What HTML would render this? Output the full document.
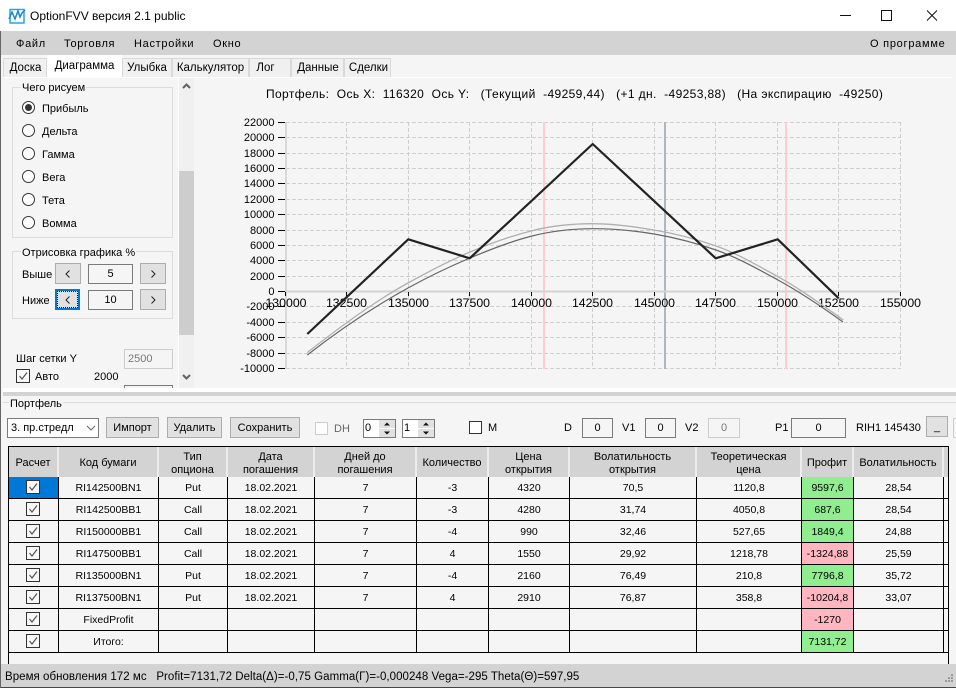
<!DOCTYPE html>
<html><head><meta charset="utf-8"><style>
html,body{margin:0;padding:0}
body{width:956px;height:688px;position:relative;overflow:hidden;background:#f5f5f5;font:11px "Liberation Sans",sans-serif;color:#000}
.a{position:absolute;box-sizing:border-box}
.t{position:absolute;white-space:nowrap;line-height:14px;font-size:11px}
.btn{position:absolute;box-sizing:border-box;background:#e1e1e1;border:1px solid #adadad;text-align:center;font-size:11px;line-height:20px;white-space:nowrap}
.btn svg{position:absolute;left:50%;top:50%;margin:-4px 0 0 -3px}
.fld{position:absolute;box-sizing:border-box;background:#f5f5f5;border:1px solid #7a7a7a;text-align:center;font-size:11px;line-height:18px}
.tab{position:absolute;top:58px;height:19px;box-sizing:border-box;background:#f0f0f0;border:1px solid #d9d9d9;border-bottom:0;text-align:center;line-height:18px;font-size:11.5px;white-space:nowrap}
.grp{position:absolute;box-sizing:border-box;border:1px solid #dcdcdc}
.lg{position:absolute;background:#f5f5f5;padding:0 1px;line-height:14px;font-size:11px;white-space:nowrap}
.rad{position:absolute;left:22px;width:13px;height:13px;box-sizing:border-box;border:1px solid #333;border-radius:50%;background:#fff}
.chk{display:block;position:absolute;width:14px;height:14px;box-sizing:border-box;border:1px solid #333;background:#f8f8f8}
.chk svg{position:absolute;left:0;top:0}
table{border-collapse:separate;border-spacing:0;table-layout:fixed;position:absolute;left:0;top:0;width:939px}
th{background:#d3d3d3;height:30px;padding:3px 0 0;font-weight:normal;font-size:11px;line-height:13px;border-right:2px solid #ececec;box-sizing:border-box;text-align:center}
td{height:22px;padding:0;border-right:1px solid #000;border-bottom:1px solid #000;box-sizing:border-box;text-align:center;font-size:10.5px;position:relative;background:#f5f5f5}
td.g{background:#90ee90}td.p{background:#ffb6c1}td.b{background:#0078d7}
td .chk{left:17px;top:3px}
</style></head><body>

<!-- title bar -->
<div class="a" style="left:0;top:0;width:956px;height:31px;background:#fff"></div>
<svg class="a" style="left:8px;top:7px" width="18" height="18" viewBox="0 0 18 18">
<path d="M2 2.5H16V16H2Z" fill="none" stroke="#29a8e0" stroke-width="1.5"/>
<path d="M1 12L4 5L7 12L10 4L12 10L14 6L17 3" fill="none" stroke="#1b86c8" stroke-width="1.5"/>
</svg>
<div class="t" style="left:30px;top:9px;font-size:12px">OptionFVV версия 2.1 public</div>
<svg class="a" style="left:830px;top:5px" width="126" height="22">
<path d="M10 10.5H21" stroke="#111"/>
<path d="M51.5 5.5H61.5V15.5H51.5Z" fill="none" stroke="#111"/>
<path d="M97 5.5L107 15.5M107 5.5L97 15.5" stroke="#111"/>
</svg>

<!-- menu -->
<div class="a" style="left:0;top:31px;width:956px;height:24px;background:#d3d3d3"></div>
<div class="t" style="left:16px;top:37px;letter-spacing:.7px">Файл</div>
<div class="t" style="left:64px;top:37px;letter-spacing:.65px">Торговля</div>
<div class="t" style="left:134px;top:37px;letter-spacing:.7px">Настройки</div>
<div class="t" style="left:213px;top:37px;letter-spacing:.7px">Окно</div>
<div class="t" style="left:870px;top:37px;letter-spacing:.75px">О программе</div>

<!-- tabs -->
<div class="a" style="left:0;top:55px;width:956px;height:22px;background:#f5f5f5"></div>
<div class="tab" style="left:3px;width:44px;padding-left:1px">Доска</div>
<div class="tab" style="left:47px;top:55px;height:22px;width:75px;background:#fff;border:0;line-height:22px">Диаграмма</div>
<div class="tab" style="left:122px;width:50px">Улыбка</div>
<div class="tab" style="left:172px;width:77px">Калькулятор</div>
<div class="tab" style="left:249px;width:42px;padding-right:9px">Лог</div>
<div class="tab" style="left:291px;width:53px;padding-left:1px">Данные</div>
<div class="tab" style="left:344px;width:47px;padding-left:2px">Сделки</div>
<div class="a" style="left:3px;top:77px;width:950px;height:1px;background:#fff"></div>

<!-- left panel -->
<div class="a" style="left:178px;top:78px;width:1px;height:310px;background:#fff"></div>
<div class="a" style="left:179px;top:78px;width:15px;height:310px;background:#f0f0f0"></div>
<div class="a" style="left:179px;top:171px;width:15px;height:164px;background:#cdcdcd"></div>
<svg class="a" style="left:179px;top:78px" width="15" height="310">
<path d="M4 10L7.5 6.5L11 10" fill="none" stroke="#606060" stroke-width="2"/>
<path d="M4 297L7.5 300.5L11 297" fill="none" stroke="#606060" stroke-width="2"/>
</svg>

<div class="grp" style="left:12px;top:87px;width:161px;height:151px"></div>
<div class="lg" style="left:21px;top:81px">Чего рисуем</div>
<div class="rad" style="top:101px;border-color:#333"><div class="a" style="left:2px;top:2px;width:7px;height:7px;border-radius:50%;background:#333"></div></div>
<div class="t" style="left:42px;top:102px">Прибыль</div>
<div class="rad" style="top:124px"></div><div class="t" style="left:42px;top:125px">Дельта</div>
<div class="rad" style="top:147px"></div><div class="t" style="left:42px;top:148px">Гамма</div>
<div class="rad" style="top:170px"></div><div class="t" style="left:42px;top:171px">Вега</div>
<div class="rad" style="top:193px"></div><div class="t" style="left:42px;top:194px">Тета</div>
<div class="rad" style="top:216px"></div><div class="t" style="left:42px;top:217px">Вомма</div>

<div class="grp" style="left:12px;top:251px;width:161px;height:68px"></div>
<div class="lg" style="left:21px;top:246px">Отрисовка графика %</div>
<div class="t" style="left:22px;top:268px">Выше</div>
<div class="btn" style="left:55px;top:263px;width:26px;height:21px"><svg width="6" height="8"><path d="M4.5 .5L1 4L4.5 7.5" fill="none" stroke="#222"/></svg></div>
<div class="fld" style="left:88px;top:264px;width:45px;height:20px">5</div>
<div class="btn" style="left:140px;top:263px;width:26px;height:21px"><svg width="6" height="8"><path d="M1.5 .5L5 4L1.5 7.5" fill="none" stroke="#222"/></svg></div>
<div class="t" style="left:22px;top:294px">Ниже</div>
<div class="btn" style="left:55px;top:289px;width:25px;height:21px;border:2px solid #0078d7"><svg width="6" height="8"><path d="M4.5 .5L1 4L4.5 7.5" fill="none" stroke="#222"/></svg><div class="a" style="left:0;top:0;width:21px;height:17px;border:1px dotted #000"></div></div>
<div class="fld" style="left:88px;top:290px;width:45px;height:20px">10</div>
<div class="btn" style="left:140px;top:289px;width:26px;height:21px"><svg width="6" height="8"><path d="M1.5 .5L5 4L1.5 7.5" fill="none" stroke="#222"/></svg></div>

<div class="t" style="left:16px;top:352px">Шаг сетки Y</div>
<div class="a" style="left:124px;top:349px;width:49px;height:20px;border:1px solid #ccc;font-size:11px;line-height:18px;padding-left:3px;color:#777">2500</div>
<span class="chk" style="left:16px;top:369px"><svg width="12" height="12"><path d="M2.5 6L5 9L10 2.5" fill="none" stroke="#555" stroke-width="1.2"/></svg></span>
<div class="t" style="left:35px;top:370px">Авто</div>
<div class="t" style="left:94px;top:370px">2000</div>
<div class="a" style="left:124px;top:385px;width:49px;height:3px;border:1px solid #7a7a7a;border-bottom:0"></div>

<!-- chart -->
<svg class="a" style="left:0;top:0" width="956" height="688" font-family="Liberation Sans" font-size="11">
<g fill="none" stroke="#cfcfcf" stroke-dasharray="4 2">
<path d="M286 122.5H901M286 137.5H901M286 153.5H901M286 168.5H901M286 183.5H901M286 199.5H901M286 214.5H901M286 230.5H901M286 245.5H901M286 260.5H901M286 276.5H901M286 306.5H901M286 322.5H901M286 337.5H901M286 353.5H901M286 368.5H901"/>
<path d="M346.5 122V369M408.5 122V369M469.5 122V369M531.5 122V369M592.5 122V369M654.5 122V369M715.5 122V369M777.5 122V369M838.5 122V369M900.5 122V369"/>
</g>
<path d="M544 122V369M786 122V369" stroke="#ffccd5" stroke-width="2"/>
<path d="M665 122V369" stroke="#aeb6c2" stroke-width="2"/>
<path d="M286 122V369" stroke="#d8d8d8" stroke-width="2"/>
<path d="M285 291.5H901" stroke="#d3d3d3" stroke-width="2"/>
<path d="M278 122.5H285M278 137.5H285M278 153.5H285M278 168.5H285M278 183.5H285M278 199.5H285M278 214.5H285M278 230.5H285M278 245.5H285M278 260.5H285M278 276.5H285M278 291.5H285M278 306.5H285M278 322.5H285M278 337.5H285M278 353.5H285M278 368.5H285" stroke="#000"/>
<path d="M285.5 292V296M346.5 292V296M408.5 292V296M469.5 292V296M531.5 292V296M592.5 292V296M654.5 292V296M715.5 292V296M777.5 292V296M838.5 292V296M900.5 292V296" stroke="#000"/>
<g text-anchor="end" fill="#000">
<text x="274.5" y="126">22000</text><text x="274.5" y="141">20000</text><text x="274.5" y="157">18000</text><text x="274.5" y="172">16000</text><text x="274.5" y="187">14000</text><text x="274.5" y="203">12000</text><text x="274.5" y="218">10000</text><text x="274.5" y="234">8000</text><text x="274.5" y="249">6000</text><text x="274.5" y="264">4000</text><text x="274.5" y="280">2000</text><text x="274.5" y="295">0</text><text x="274.5" y="310">-2000</text><text x="274.5" y="326">-4000</text><text x="274.5" y="341">-6000</text><text x="274.5" y="357">-8000</text><text x="274.5" y="372">-10000</text>
</g>
<g text-anchor="middle" font-size="12.3" fill="#000">
<text x="286" y="307">130000</text><text x="346.5" y="307">132500</text><text x="408.5" y="307">135000</text><text x="469.5" y="307">137500</text><text x="531.5" y="307">140000</text><text x="592.5" y="307">142500</text><text x="654.5" y="307">145000</text><text x="715.5" y="307">147500</text><text x="777.5" y="307">150000</text><text x="838.5" y="307">152500</text><text x="900.5" y="307">155000</text>
</g>
<path fill="none" stroke="#b0b0b0" stroke-width="1.3" d="M307.3 352.5C340.9 326.3 374.4 301.5 408 283C428.67 271.6 449.33 260.7 470 252C490.67 243.3 511.33 235.9 532 230.7C552.33 225.6 572.67 223.7 593 223.7C613.33 223.7 633.67 226.5 654 230C674.67 233.5 695.33 238.8 716 246C736.67 253.2 757.33 265.3 778 276.7C799.67 288.6 821.33 304.4 843.3 320"/>
<path fill="none" stroke="#666" stroke-width="1.2" d="M307.3 355C340.9 328.8 374.4 306.5 408 288C428.67 276.6 449.33 266.7 470 258C490.67 249.3 511.33 241.2 532 236C552.33 230.9 572.67 228.7 593 228.7C613.33 228.7 633.67 230.5 654 234C674.67 237.5 695.33 242.8 716 250C736.67 257.2 757.33 268.6 778 280C799.67 291.9 821.33 306.4 843 322"/>
<polyline fill="none" stroke="#222" stroke-width="2.2" stroke-linejoin="round" points="307.3,334 408.3,239.3 469.7,258.3 592.7,144 715.7,258.3 777.7,239.3 838.7,298.3"/>
</svg>
<div class="t" style="left:266px;top:87px;font-size:12px;white-space:pre;letter-spacing:.38px">Портфель:  Ось X:  116320  Ось Y:   (Текущий  -49259,44)   (+1 дн.  -49253,88)   (На экспирацию  -49250)</div>

<!-- splitter -->
<div class="a" style="left:3px;top:388px;width:953px;height:4px;background:#fff"></div>
<div class="a" style="left:3px;top:392px;width:953px;height:4px;background:#d3d3d3"></div>
<div class="a" style="left:3px;top:402px;width:953px;height:1px;background:#dcdcdc"></div>
<div class="lg" style="left:9px;top:397px">Портфель</div>

<!-- toolbar -->
<div class="a" style="left:7px;top:418px;width:92px;height:20px;background:#fff;border:1px solid #7a7a7a;line-height:18px;padding-left:3px;font-size:11px">3. пр.стредл<svg class="a" style="left:78px;top:6px" width="10" height="6"><path d="M1 1L5 5L9 1" fill="none" stroke="#666"/></svg></div>
<div class="btn" style="left:106px;top:417px;width:53px;height:21px">Импорт</div>
<div class="btn" style="left:167px;top:417px;width:55px;height:21px">Удалить</div>
<div class="btn" style="left:230px;top:417px;width:70px;height:21px">Сохранить</div>
<div class="a" style="left:315px;top:422px;width:13px;height:13px;background:#fdfdfd;border:1px solid #ccc"></div>
<div class="t" style="left:334px;top:422px;color:#666">DH</div>
<div class="a" style="left:363px;top:419px;width:33px;height:19px;background:#fff;border:1px solid #7a7a7a;padding-left:1px;line-height:17px">0</div>
<svg class="a" style="left:379px;top:420px" width="16" height="17"><rect width="16" height="8" fill="#e1e1e1"/><rect y="9" width="16" height="8" fill="#e1e1e1"/><path d="M5 5.5L8 2.5L11 5.5ZM5 11.5L8 14.5L11 11.5Z" fill="#111"/></svg>
<div class="a" style="left:402px;top:419px;width:33px;height:19px;background:#fff;border:1px solid #7a7a7a;padding-left:1px;line-height:17px">1</div>
<svg class="a" style="left:418px;top:420px" width="16" height="17"><rect width="16" height="8" fill="#e1e1e1"/><rect y="9" width="16" height="8" fill="#e1e1e1"/><path d="M5 5.5L8 2.5L11 5.5ZM5 11.5L8 14.5L11 11.5Z" fill="#111"/></svg>
<div class="a" style="left:469px;top:421px;width:13px;height:13px;background:#fff;border:1px solid #333"></div>
<div class="t" style="left:488px;top:421px">M</div>
<div class="t" style="left:564px;top:421px">D</div>
<div class="fld" style="left:582px;top:418px;width:31px;height:20px">0</div>
<div class="t" style="left:622px;top:421px">V1</div>
<div class="fld" style="left:645px;top:418px;width:31px;height:20px">0</div>
<div class="t" style="left:685px;top:421px">V2</div>
<div class="fld" style="left:708px;top:418px;width:32px;height:20px;border-color:#ccc;color:#777">0</div>
<div class="t" style="left:775px;top:421px">P1</div>
<div class="fld" style="left:791px;top:418px;width:55px;height:20px">0</div>
<div class="t" style="left:856px;top:421px;font-size:11px">RIH1 145430</div>
<div class="btn" style="left:926px;top:416px;width:22px;height:21px">_</div>
<div class="a" style="left:953px;top:418px;width:3px;height:20px;border:1px solid #ccc;border-right:0"></div>

<!-- table -->
<div class="a" style="left:8px;top:446px;width:941px;height:218px;border:1px solid #000;border-bottom:0;overflow:hidden;background:#f5f5f5">
<table>
<colgroup><col style="width:50px"><col style="width:100px"><col style="width:69px"><col style="width:87px"><col style="width:102px"><col style="width:72px"><col style="width:81px"><col style="width:127px"><col style="width:105px"><col style="width:52px"><col style="width:90px"><col style="width:4px"></colgroup>
<tr><th>Расчет</th><th>Код бумаги</th><th>Тип<br>опциона</th><th>Дата<br>погашения</th><th>Дней до<br>погашения</th><th>Количество</th><th>Цена<br>открытия</th><th>Волатильность<br>открытия</th><th>Теоретическая<br>цена</th><th>Профит</th><th>Волатильность</th><th style="border:0"></th></tr>
<tr><td class="b"><span class="chk"><svg width="12" height="12"><path d="M2.5 6L5 9L10 2.5" fill="none" stroke="#555" stroke-width="1.2"/></svg></span></td><td>RI142500BN1</td><td>Put</td><td>18.02.2021</td><td>7</td><td>-3</td><td>4320</td><td>70,5</td><td>1120,8</td><td class="g">9597,6</td><td>28,54</td><td style="border-right:0"></td></tr>
<tr><td><span class="chk"><svg width="12" height="12"><path d="M2.5 6L5 9L10 2.5" fill="none" stroke="#555" stroke-width="1.2"/></svg></span></td><td>RI142500BB1</td><td>Call</td><td>18.02.2021</td><td>7</td><td>-3</td><td>4280</td><td>31,74</td><td>4050,8</td><td class="g">687,6</td><td>28,54</td><td style="border-right:0"></td></tr>
<tr><td><span class="chk"><svg width="12" height="12"><path d="M2.5 6L5 9L10 2.5" fill="none" stroke="#555" stroke-width="1.2"/></svg></span></td><td>RI150000BB1</td><td>Call</td><td>18.02.2021</td><td>7</td><td>-4</td><td>990</td><td>32,46</td><td>527,65</td><td class="g">1849,4</td><td>24,88</td><td style="border-right:0"></td></tr>
<tr><td><span class="chk"><svg width="12" height="12"><path d="M2.5 6L5 9L10 2.5" fill="none" stroke="#555" stroke-width="1.2"/></svg></span></td><td>RI147500BB1</td><td>Call</td><td>18.02.2021</td><td>7</td><td>4</td><td>1550</td><td>29,92</td><td>1218,78</td><td class="p">-1324,88</td><td>25,59</td><td style="border-right:0"></td></tr>
<tr><td><span class="chk"><svg width="12" height="12"><path d="M2.5 6L5 9L10 2.5" fill="none" stroke="#555" stroke-width="1.2"/></svg></span></td><td>RI135000BN1</td><td>Put</td><td>18.02.2021</td><td>7</td><td>-4</td><td>2160</td><td>76,49</td><td>210,8</td><td class="g">7796,8</td><td>35,72</td><td style="border-right:0"></td></tr>
<tr><td><span class="chk"><svg width="12" height="12"><path d="M2.5 6L5 9L10 2.5" fill="none" stroke="#555" stroke-width="1.2"/></svg></span></td><td>RI137500BN1</td><td>Put</td><td>18.02.2021</td><td>7</td><td>4</td><td>2910</td><td>76,87</td><td>358,8</td><td class="p">-10204,8</td><td>33,07</td><td style="border-right:0"></td></tr>
<tr><td><span class="chk"><svg width="12" height="12"><path d="M2.5 6L5 9L10 2.5" fill="none" stroke="#555" stroke-width="1.2"/></svg></span></td><td>FixedProfit</td><td></td><td></td><td></td><td></td><td></td><td></td><td></td><td class="p">-1270</td><td></td><td style="border-right:0"></td></tr>
<tr><td><span class="chk"><svg width="12" height="12"><path d="M2.5 6L5 9L10 2.5" fill="none" stroke="#555" stroke-width="1.2"/></svg></span></td><td>Итого:</td><td></td><td></td><td></td><td></td><td></td><td></td><td></td><td class="g">7131,72</td><td></td><td style="border-right:0"></td></tr>
</table>
</div>

<!-- status -->
<div class="a" style="left:0;top:664px;width:956px;height:23px;background:#d3d3d3"></div>
<div class="t" style="left:5px;top:670px;font-size:11.5px;white-space:pre;letter-spacing:.04px">Время обновления 172 мс   Profit=7131,72 Delta(Δ)=-0,75 Gamma(Γ)=-0,000248 Vega=-295 Theta(Θ)=597,95</div>
<svg class="a" style="left:942px;top:672px" width="12" height="13"><g fill="#9a9a9a"><rect x="9" y="2" width="2" height="2"/><rect x="6" y="5" width="2" height="2"/><rect x="9" y="5" width="2" height="2"/><rect x="3" y="8" width="2" height="2"/><rect x="6" y="8" width="2" height="2"/><rect x="9" y="8" width="2" height="2"/></g></svg>
<div class="a" style="left:0;top:687px;width:956px;height:1px;background:#2f4f4f"></div>
<div class="a" style="left:0;top:31px;width:1px;height:657px;background:#666"></div>
</body></html>
